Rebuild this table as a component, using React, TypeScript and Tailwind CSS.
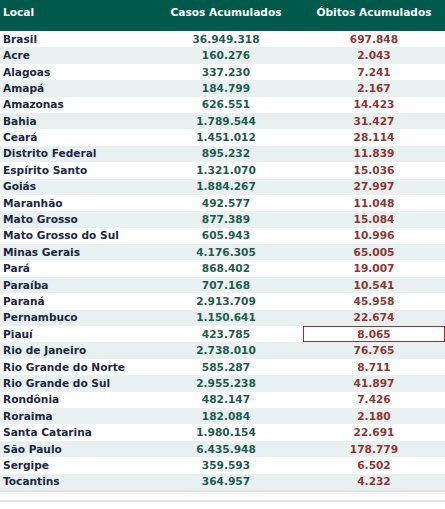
import React from "react";

const rows: [string, string, string][] = [
  ["Brasil", "36.949.318", "697.848"],
  ["Acre", "160.276", "2.043"],
  ["Alagoas", "337.230", "7.241"],
  ["Amapá", "184.799", "2.167"],
  ["Amazonas", "626.551", "14.423"],
  ["Bahia", "1.789.544", "31.427"],
  ["Ceará", "1.451.012", "28.114"],
  ["Distrito Federal", "895.232", "11.839"],
  ["Espírito Santo", "1.321.070", "15.036"],
  ["Goiás", "1.884.267", "27.997"],
  ["Maranhão", "492.577", "11.048"],
  ["Mato Grosso", "877.389", "15.084"],
  ["Mato Grosso do Sul", "605.943", "10.996"],
  ["Minas Gerais", "4.176.305", "65.005"],
  ["Pará", "868.402", "19.007"],
  ["Paraíba", "707.168", "10.541"],
  ["Paraná", "2.913.709", "45.958"],
  ["Pernambuco", "1.150.641", "22.674"],
  ["Piauí", "423.785", "8.065"],
  ["Rio de Janeiro", "2.738.010", "76.765"],
  ["Rio Grande do Norte", "585.287", "8.711"],
  ["Rio Grande do Sul", "2.955.238", "41.897"],
  ["Rondônia", "482.147", "7.426"],
  ["Roraima", "182.084", "2.180"],
  ["Santa Catarina", "1.980.154", "22.691"],
  ["São Paulo", "6.435.948", "178.779"],
  ["Sergipe", "359.593", "6.502"],
  ["Tocantins", "364.957", "4.232"],
];

export default function App() {
  return (
    <div
      className="w-[445px] h-[509px] bg-white overflow-hidden font-bold text-[10.6px]"
      style={{ fontFamily: '"DejaVu Sans", Verdana, sans-serif' }}
    >
      <div className="flex h-[31px] bg-[#00594a] text-white pt-[5px]">
        <div className="w-[149px] pl-[3px] leading-[14px]">Local</div>
        <div className="w-[154px] text-center leading-[14px]">Casos Acumulados</div>
        <div className="w-[142px] text-center leading-[14px]">Óbitos Acumulados</div>
      </div>
      <div className="border-b-2 border-[#e3e3e3]">
        {rows.map(([name, casos, obitos], i) => (
          <div
            key={name}
            className={`flex h-[16.4px] items-center ${i % 2 === 1 ? "bg-[#e8f1ef]" : "bg-white"}`}
          >
            <div className="w-[149px] pl-[3px] pt-[1px] text-[#1c2740]">{name}</div>
            <div className="w-[154px] pt-[1px] text-center text-[#1d5c4f]">{casos}</div>
            <div
              className={`w-[142px] h-full pt-[1px] flex items-center justify-center text-[#8f3535] ${
                name === "Piauí" ? "border border-[#8f3535]" : ""
              }`}
            >
              {obitos}
            </div>
          </div>
        ))}
      </div>
      <div className="mt-[8px] h-[2px] bg-[#e3e3e3]" />
    </div>
  );
}
